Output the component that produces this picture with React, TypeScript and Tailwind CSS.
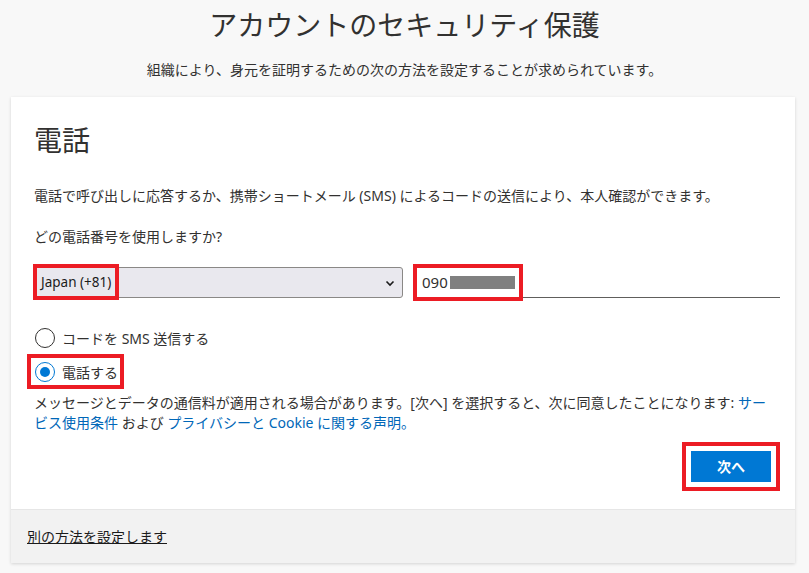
import React from "react";

const font = {
  fontFamily: '"Segoe UI", "Noto Sans", "Noto Sans CJK JP", sans-serif',
};

function RedBox({ className }: { className: string }) {
  return <div className={`pointer-events-none absolute border-4 border-[#ec1c24] ${className}`} />;
}

function Radio({ checked }: { checked?: boolean }) {
  return (
    <span
      className={`flex h-[20px] w-[20px] shrink-0 items-center justify-center rounded-full border ${
        checked ? "border-[#0078d4]" : "border-[#323130]"
      } bg-white`}
    >
      {checked && <span className="h-[10px] w-[10px] rounded-full bg-[#0078d4]" />}
    </span>
  );
}

export default function App() {
  return (
    <div className="min-h-screen bg-[#f8f8f8] text-[#323130]" style={font}>
      <h1 className="pt-[6px] text-center text-[28px] font-normal leading-[38px]">
        アカウントのセキュリティ保護
      </h1>
      <p className="mt-[16px] text-center text-[14px] leading-[20px]">
        組織により、身元を証明するための次の方法を設定することが求められています。
      </p>

      <div className="ml-[11px] mr-[14px] mt-[17px] bg-white shadow-[0_1px_3px_rgba(0,0,0,0.15)]">
        <div className="pl-[23px] pr-[15px] pb-[27px] pt-[25px]">
          <h2 className="text-[28px] font-normal leading-[36px]">電話</h2>
          <p className="mt-[28px] text-[14px] leading-[20px]">
            電話で呼び出しに応答するか、携帯ショートメール (SMS) によるコードの送信により、本人確認ができます。
          </p>
          <p className="mt-[21px] text-[14px] leading-[20px]">どの電話番号を使用しますか?</p>

          <div className="mt-[20px] flex gap-[12px]">
            <div className="relative flex h-[31px] w-[369px] items-center justify-between rounded-[3px] border border-[#8a8886] bg-[#e9e8ee] pl-[6px] pr-[6px]">
              <span className="text-[13.5px] text-[#1b1b1b]">Japan (+81)</span>
              <svg width="12" height="12" viewBox="0 0 12 12" fill="none">
                <path d="M2.5 4.5 L6 8 L9.5 4.5" stroke="#1b1b1b" strokeWidth="1.6" />
              </svg>
              <RedBox className="left-[-2px] top-[-4px] h-[36px] w-[86px]" />
            </div>
            <div className="relative flex h-[31px] flex-1 items-center border-b border-[#605e5c] pl-[7px]">
              <span className="text-[15px] text-[#323130]">090</span>
              <span className="ml-[2px] h-[13px] w-[65px] bg-[#808080]" />
              <RedBox className="left-[-2px] top-[-3px] h-[37px] w-[110px]" />
            </div>
          </div>

          <div className="mt-[23px] flex h-[34px] items-center gap-[7px] pl-[1px]">
            <Radio />
            <span className="text-[14px]">コードを SMS 送信する</span>
          </div>
          <div className="flex h-[34px] items-center">
            <div className="relative flex items-center gap-[7px] pl-[1px]">
              <Radio checked />
              <span className="text-[14px]">電話する</span>
              <RedBox className="left-[-7px] top-[-8px] h-[35px] w-[97px]" />
            </div>
          </div>

          <p className="mt-[4px] pr-[12px] text-[14px] leading-[20px]">
            メッセージとデータの通信料が適用される場合があります。[次へ] を選択すると、次に同意したことになります:{" "}
            <a className="text-[#0067b8]">サービス使用条件</a> および{" "}
            <a className="text-[#0067b8]">プライバシーと Cookie に関する声明。</a>
          </p>

          <div className="mt-[18px] flex justify-end pr-[9px]">
            <div className="relative">
              <button className="h-[31px] w-[80px] bg-[#0078d4] text-[14px] font-bold text-white">
                次へ
              </button>
              <RedBox className="-inset-[9px]" />
            </div>
          </div>
        </div>

        <div className="flex h-[54px] items-center border-t border-[#e6e6e6] bg-[#f2f2f2] pl-[16px]">
          <a className="text-[14px] text-[#1b1b1b] underline">別の方法を設定します</a>
        </div>
      </div>
    </div>
  );
}
